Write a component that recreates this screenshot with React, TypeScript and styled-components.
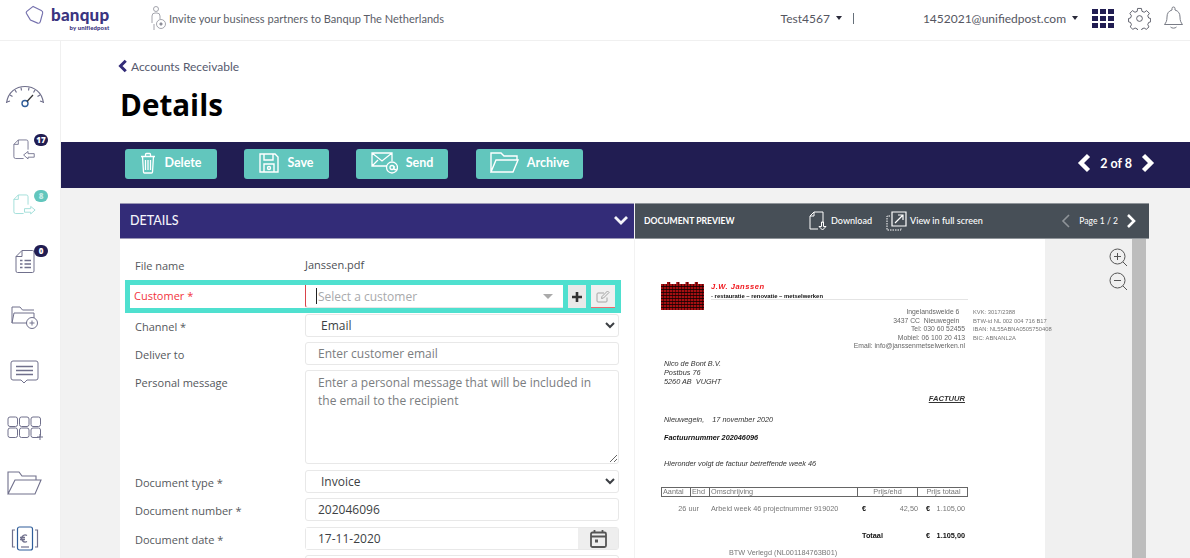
import React from 'react'
import styled, { createGlobalStyle } from 'styled-components'

const GlobalStyle = createGlobalStyle`
  html, body {
    margin: 0;
    padding: 0;
    height: 558px;
    overflow: hidden;
    background: #fff;
    font-family: 'Open Sans', 'Liberation Sans', sans-serif;
  }
  * {
    box-sizing: border-box;
  }
`

const Page = styled.div`
  width: 1190px;
  height: 558px;
  overflow: hidden;
  display: flex;
  flex-direction: column;
`
const TopBar = styled.header`
  flex: none;
  height: 41px;
  padding-bottom: 4px;
  display: flex;
  align-items: center;
  border-bottom: 1px solid #f0f0f0;
  font-family: Lato, 'Liberation Sans', sans-serif;
  color: #55565f;
`
const Logo = styled.div`
  display: flex;
  align-items: center;
  width: 150px;
  padding-left: 25px;
  color: #3a3480;
`
const LogoMarkWrap = styled.span`
  margin-top: -6px;
`
const LogoText = styled.div`
  margin-left: 7px;
  display: flex;
  flex-direction: column;
  align-items: flex-end;
  font-weight: 900;
  font-size: 17px;
  line-height: 18px;
  letter-spacing: 0.2px;
`
const LogoSub = styled.span`
  font-size: 6px;
  line-height: 7px;
  letter-spacing: 0.1px;
`
const Invite = styled.div`
  display: flex;
  align-items: center;
  gap: 2px;
  font-size: 11.05px;
  color: #5b5e68;
`
const TopRight = styled.div`
  margin-left: auto;
  display: flex;
  align-items: center;
  font-size: 12px;
  padding-right: 7px;
`
const Caret = styled.span<{ $gap?: number; $color?: string }>`
  width: 0;
  height: 0;
  margin-left: ${(p) => p.$gap ?? 6}px;
  border-left: 3.5px solid transparent;
  border-right: 3.5px solid transparent;
  border-top: 4px solid ${(p) => p.$color ?? '#2a2a3a'};
`
const CustomerCaret = styled.span`
  width: 0;
  height: 0;
  margin-left: auto;
  border-left: 5px solid transparent;
  border-right: 5px solid transparent;
  border-top: 5px solid #aaa;
`
const Company = styled.span`
  display: flex;
  align-items: center;
`
const Divider = styled.span`
  width: 1px;
  height: 11px;
  margin-left: 11px;
  margin-right: 69px;
  background: #66707a;
`
const Email = styled.span`
  display: flex;
  align-items: center;
  margin-right: 14px;
`
const AppsGrid = styled.div`
  display: grid;
  grid-template-columns: repeat(3, 6px);
  grid-auto-rows: 5px;
  gap: 2px;
  margin-right: 14px;
`
const AppDot = styled.span`
  background: #211d52;
`
const BellWrap = styled.span`
  display: flex;
  margin-left: 13px;
`

const Body = styled.div`
  flex: 1;
  display: flex;
  min-height: 0;
`
const SideNav = styled.nav`
  flex: none;
  width: 61px;
  padding-top: 27px;
  border-right: 1px solid #f0f0f0;
  display: flex;
  flex-direction: column;
  overflow: hidden;
`
const NavItem = styled.div<{ $color?: string }>`
  position: relative;
  flex: none;
  height: 55.4px;
  display: flex;
  align-items: center;
  justify-content: center;
  padding-right: 11px;
  color: ${(p) => p.$color ?? '#70708c'};
`
const Badge = styled.span<{ $teal?: boolean }>`
  position: absolute;
  top: 11px;
  left: 34px;
  min-width: 14px;
  height: 12px;
  padding: 0 2px;
  border-radius: 7px;
  background: ${(p) => (p.$teal ? '#62c6bd' : '#211d52')};
  color: ${(p) => (p.$teal ? '#c6ece8' : '#fff')};
  font-size: 8px;
  font-weight: 800;
  line-height: 12px;
  text-align: center;
`

const Main = styled.main`
  flex: 1;
  min-width: 0;
  display: flex;
  flex-direction: column;
`
const TitleBlock = styled.div`
  flex: none;
  height: 101px;
  padding: 16px 0 0 59px;
`
const BackLink = styled.div`
  display: flex;
  align-items: center;
  height: 18px;
  margin-left: -3px;
  font-family: Lato, 'Liberation Sans', sans-serif;
  font-size: 12px;
  color: #565a6e;
`
const BackArrow = styled.span`
  color: #332c78;
`
const Title = styled.h1`
  margin: 11px 0 0;
  font-size: 29.6px;
  line-height: 38px;
  font-weight: 700;
  color: #000;
`
const Toolbar = styled.div`
  flex: none;
  height: 46px;
  background: #211d52;
  display: flex;
  align-items: center;
  padding: 0 34px 2px 64px;
  font-family: Lato, 'Liberation Sans', sans-serif;
`
const ActionButton = styled.div<{ $width: number; $gap: number }>`
  width: ${(p) => p.$width}px;
  height: 30px;
  margin-right: ${(p) => p.$gap}px;
  padding-bottom: 3px;
  display: flex;
  align-items: center;
  justify-content: center;
  gap: 8px;
  border-radius: 3px;
  background: #62c6bd;
  color: #fff;
  font-size: 12.5px;
  font-weight: 700;
`
const Pager = styled.div`
  margin-left: auto;
  padding-bottom: 2px;
  display: flex;
  align-items: center;
  gap: 4px;
  color: #fff;
  font-size: 12.5px;
  font-weight: 700;
`
const Workspace = styled.div`
  flex: 1;
  min-height: 0;
  background: #f2f2f2;
  padding: 15px 41px 0 59px;
  display: flex;
  gap: 1px;
  overflow: hidden;
`
const DetailsPanel = styled.section`
  flex: none;
  width: 514px;
  background: #fff;
  display: flex;
  flex-direction: column;
`
const DetailsHead = styled.div`
  flex: none;
  height: 36px;
  padding: 0 5px 2px 10px;
  background: #332c78;
  border: 1px solid #9a97b5;
  border-width: 1px 0;
  color: #f4f4fa;
  display: flex;
  align-items: center;
  justify-content: space-between;
  font-family: Lato, 'Liberation Sans', sans-serif;
  font-size: 12.5px;
  font-weight: 500;
`
const Form = styled.div`
  padding: 14px 15px 0 15px;
`
const Row = styled.div<{ $mb?: number }>`
  display: grid;
  grid-template-columns: 170px 1fr;
  margin-bottom: ${(p) => p.$mb ?? 4}px;
`
const Label = styled.label`
  font-size: 11px;
  line-height: 23px;
  padding-top: 1px;
  color: #55585c;
`
const FileLabel = styled(Label)`
  padding-top: 2px;
  line-height: 22px;
`
const FileName = styled.span`
  font-size: 11px;
  line-height: 23px;
  color: #4d5055;
`
const TextField = styled.input`
  width: 100%;
  height: 23px;
  padding: 0 12px;
  border: 1px solid #e8e8e8;
  border-radius: 3px;
  outline: none;
  background: #fff;
  font-family: inherit;
  font-size: 12px;
  color: #3c3f44;
  &::placeholder {
    color: #7a7d80;
    opacity: 1;
  }
`
const SelectField = styled.select`
  width: 100%;
  height: 23px;
  padding: 0 11px;
  border: 1px solid #e8e8e8;
  border-radius: 3px;
  outline: none;
  background: #fff;
  font-family: inherit;
  font-size: 12px;
  color: #3c3f44;
`
const MessageField = styled.textarea`
  display: block;
  width: 100%;
  height: 94px;
  padding: 3px 12px;
  border: 1px solid #e8e8e8;
  border-radius: 3px;
  outline: none;
  font-family: inherit;
  font-size: 12px;
  line-height: 18px;
  color: #3c3f44;
  &::placeholder {
    color: #7a7d80;
    opacity: 1;
  }
`
const CustomerRow = styled.div`
  display: flex;
  gap: 5px;
  height: 33px;
  margin: 0 -2px 1px -10px;
  padding: 5px 6px 5px 5px;
  background: #4fe0cf;
`
const CustomerMain = styled.div`
  flex: 1;
  display: grid;
  grid-template-columns: 175px 1fr;
  background: #fff;
`
const CustomerLabel = styled.span`
  padding-left: 4px;
  font-size: 11px;
  line-height: 22px;
  color: #f2343c;
`
const CustomerSelect = styled.div`
  display: flex;
  align-items: center;
  border-left: 1px solid #d9434a;
  border-bottom: 1px solid #e6e6e6;
  border-radius: 0 0 0 3px;
  padding: 0 10px 0 10px;
  font-size: 12px;
  color: #a8a9ab;
`
const TextCursor = styled.span`
  width: 1px;
  height: 16px;
  margin-right: 1px;
  background: #222;
`
const CustomerAdd = styled.div`
  width: 18px;
  display: flex;
  align-items: center;
  justify-content: center;
  background: #e9e9e9;
  color: #333;
`
const CustomerEdit = styled.div`
  width: 24px;
  display: flex;
  align-items: center;
  justify-content: center;
  background: #f0f0f0;
  border-bottom: 1px solid #ee6b70;
  color: #a4a4a4;
`
const DateGroup = styled.div`
  display: flex;
  height: 23px;
  border: 1px solid #e8e8e8;
  border-radius: 3px;
`
const DateValue = styled.input`
  flex: 1;
  min-width: 0;
  padding: 0 12px;
  border: 0;
  outline: none;
  font-family: inherit;
  font-size: 12px;
  color: #3c3f44;
`
const DateButton = styled.div`
  flex: none;
  width: 40px;
  display: flex;
  align-items: center;
  justify-content: center;
  background: #eeeeee;
  color: #555;
`

const PreviewPanel = styled.section`
  flex: none;
  width: 514px;
  display: flex;
  flex-direction: column;
  font-family: Lato, 'Liberation Sans', sans-serif;
`
const PreviewHead = styled.div`
  flex: none;
  height: 36px;
  background: #474f57;
  border: 1px solid #8f9499;
  border-width: 1px 0;
  display: flex;
  align-items: center;
  padding: 0 0 1px 9px;
  color: #fff;
  font-size: 8.6px;
`
const PreviewTitle = styled.span`
  width: 165px;
  font-weight: 700;
`
const PreviewAction = styled.span<{ $gap: number }>`
  display: flex;
  align-items: center;
  gap: 3px;
  margin-right: ${(p) => p.$gap}px;
  font-size: 9.05px;
  font-weight: 500;
`
const PageControl = styled.div`
  margin-left: auto;
  display: flex;
  align-items: center;
  gap: 4px;
  padding-right: 11px;
`
const MutedArrow = styled.span`
  color: #8f9499;
`
const PreviewBody = styled.div`
  flex: 1;
  display: flex;
  min-height: 0;
`
const Sheet = styled.div`
  flex: none;
  width: 410px;
  background: #fff;
  padding: 43px 0 0 26px;
  font-family: 'Liberation Sans', Arial, sans-serif;
  filter: blur(0.7px);
  font-size: 7.3px;
  color: #333;
`
const Rail = styled.div`
  flex: 1;
  background: #f0f0f0;
  display: flex;
  flex-direction: column;
  align-items: flex-end;
  gap: 5px;
  padding: 9px 4px 0 0;
  color: #555;
`
const ScrollBar = styled.div`
  flex: none;
  width: 14px;
  margin-right: 3px;
  background: #bdbdbd;
`
const Letterhead = styled.div`
  display: flex;
  height: 28px;
`
const Bricks = styled.div`
  flex: none;
  width: 43px;
  height: 28px;
  margin-right: 7px;
  background-image: repeating-linear-gradient(90deg, transparent 0 2px, rgba(20, 0, 0, 0.55) 2px 3px),
    repeating-linear-gradient(0deg, #a50f12 0 2px, #2a0505 2px 3px);
  border-top: 2px dashed #fff;
`
const CompanyName = styled.div`
  color: #f01a20;
  font-size: 7.6px;
  font-weight: 700;
  font-style: italic;
  letter-spacing: 0.5px;
  line-height: 9px;
`
const Trades = styled.div`
  margin-top: 2px;
  color: #111;
  font-size: 5.9px;
  font-weight: 700;
  white-space: nowrap;
  width: 257px;
  border-bottom: 1px solid #e4e4e4;
`
const AddressBlock = styled.div`
  display: grid;
  grid-template-columns: 304px 100px;
  column-gap: 8px;
  margin-top: -2px;
  line-height: 8.6px;
`
const AddressLeft = styled.div`
  text-align: right;
  color: #666;
  font-size: 6.8px;
  white-space: pre;
`
const AddressRight = styled.div`
  color: #777;
  font-size: 5.8px;
  white-space: nowrap;
`
const Addressee = styled.div`
  margin: 8px 0 0 3px;
  font-style: italic;
  line-height: 9px;
`
const FactuurHead = styled.div`
  width: 304px;
  margin-top: 8px;
  text-align: right;
  font-size: 7.6px;
  font-weight: 700;
  font-style: italic;
  text-decoration: underline;
`
const LetterLine = styled.div<{ $mt: number; $bold?: boolean }>`
  margin: ${(p) => p.$mt}px 0 0 3px;
  line-height: 9px;
  font-style: italic;
  font-weight: ${(p) => (p.$bold ? 700 : 400)};
  color: ${(p) => (p.$bold ? '#111' : '#333')};
  white-space: pre;
`
const InvoiceTable = styled.div`
  display: grid;
  grid-template-columns: 29px 19px 148px 60px 51px;
  width: 307px;
  margin-top: 19px;
  border: 1px solid #666;
  color: #777;
  line-height: 8px;
  white-space: nowrap;
`
const HeadCell = styled.span<{ $center?: boolean }>`
  padding: 0 1px;
  border-right: 1px solid #666;
  text-align: ${(p) => (p.$center ? 'center' : 'left')};
  &:last-child {
    border-right: 0;
  }
`
const LineRow = styled.div<{ $mt: number; $strong?: boolean }>`
  display: grid;
  grid-template-columns: 50px 151px 30px 26px 17px 30px;
  width: 304px;
  margin-top: ${(p) => p.$mt}px;
  line-height: 9px;
  color: ${(p) => (p.$strong ? '#111' : '#777')};
  font-weight: ${(p) => (p.$strong ? 700 : 400)};
  white-space: nowrap;
`
const QtyCell = styled.span`
  padding-right: 12px;
  text-align: right;
`
const RightCell = styled.span`
  text-align: right;
`
const EuroCell = styled.span`
  color: #111;
  font-weight: 700;
`
const SecondEuro = styled(EuroCell)`
  padding-left: 8px;
`
const VatNote = styled.div`
  margin: 8px 0 0 68px;
  color: #777;
  line-height: 9px;
`

const Ico = styled.svg`
  display: block;
  flex: none;
  fill: none;
  stroke: currentColor;
  stroke-width: 1;
`

const Chevron = ({ dir = 'left', size = 14, width = 3 }: { dir?: 'left' | 'right' | 'down'; size?: number; width?: number }) => {
  const d = dir === 'left' ? 'M10 2 4 8l6 6' : dir === 'right' ? 'M6 2l6 6-6 6' : 'M2 5l6 6 6-6'
  return (
    <Ico width={size} height={size} viewBox="0 0 16 16" style={{ strokeWidth: width }}>
      <path d={d} />
    </Ico>
  )
}

const DocBase = () => <path d="M6 1 1 6v14a2 2 0 0 0 2 2h9M6 1v5H1M6 1h9a2 2 0 0 1 2 2v9" />

const DocIn = () => (
  <Ico width="23" height="24" viewBox="0 0 26 27">
    <DocBase />
    <path d="M12 18l5-4v2.500h7v4h-7v2z" />
  </Ico>
)
const DocOut = () => (
  <Ico width="23" height="24" viewBox="0 0 26 27">
    <DocBase />
    <path d="M25 18l-5-4v2.500h-7v4h7v2z" />
  </Ico>
)
const DocList = () => (
  <Ico width="20" height="25" viewBox="0 0 20 24">
    <path d="M7 1h10.500a1.500 1.500 0 0 1 1.500 1.500v19a1.500 1.500 0 0 1-1.500 1.500h-15A1.500 1.500 0 0 1 1 21.500V7zM7 1v6H1" />
    <path d="M5 11h2.500M5 14.500h2.500M5 18h2.500M9.500 11H16M9.500 14.500H16M9.500 18H16" strokeWidth="1.300" />
  </Ico>
)
const Gauge = () => (
  <Ico width="40" height="24" viewBox="0 0 40 24" style={{ strokeWidth: 1.2 }}>
    <path d="M1.500 19C3 8 11 2.500 20 2.500S37 8 38.500 19" />
    <path d="M2 18l3-1M5 11l2.500 1.500M10 6l1.500 2.500M16 3.500l.5 3M24 3.500l-.5 3M30 6l-1.500 2.500M35 11l-2.500 1.500M38 18l-3-1" />
    <circle cx="20" cy="19.500" r="3" stroke="#2f5d9a" strokeWidth="1.400" />
    <path d="M22 17.500l6-6.500" stroke="#333" />
  </Ico>
)
const FolderPlus = () => (
  <Ico width="28" height="25" viewBox="0 0 28 25">
    <path d="M1 18V2h8l2.500 3H23M3 8h20v5M3 8 1 18h15" />
    <circle cx="21" cy="18" r="5.500" />
    <path d="M21 15.500v5M18.500 18h5" />
  </Ico>
)
const Message = () => (
  <Ico width="29" height="25" viewBox="0 0 29 25">
    <path d="M3 1h23a2 2 0 0 1 2 2v15a2 2 0 0 1-2 2h-9l-3 3-3-3H3a2 2 0 0 1-2-2V3a2 2 0 0 1 2-2z" />
    <path d="M6 6.500h17M6 10.500h17M6 14.500h17" strokeWidth="1.300" />
  </Ico>
)
const TilesPlus = () => (
  <Ico width="36" height="24" viewBox="0 0 36 24">
    {[0, 11.500, 23].map((x) =>
      [0, 11].map((y) => <rect key={`${x}-${y}`} x={x + 1} y={y + 1} width="9.500" height="9.500" rx="2" />),
    )}
    <path d="M33 18v6M30 21h6" />
  </Ico>
)
const FolderOpen = () => (
  <Ico width="35" height="26" viewBox="0 0 35 26">
    <path d="M1 24V2h11l3 4h14v4M1 24h27l6-14H8z" strokeWidth="1.100" />
  </Ico>
)
const EuroDoc = () => (
  <Ico width="28" height="25" viewBox="0 0 28 25" style={{ strokeWidth: 1.200 }}>
    <rect x="6.500" y="1" width="15" height="23" rx="2" stroke="#2f5d9a" />
    <path d="M4 4H1.500v17H4M24 4h2.500v17H24" />
    <path d="M16 9.500a3.500 3.500 0 1 0 0 6M9 11.500h5M9 13.500h5" strokeWidth="1.400" />
    <path d="M10 21h8" />
  </Ico>
)

const LogoMark = () => (
  <Ico width="19" height="22" viewBox="0 0 21 22" style={{ color: '#7470ad', strokeWidth: 1.300 }}>
    <path d="M9 1.500l9 4.500q2 1 1.500 3L17 18q-.5 2.500-3 2L6 16.500 1.500 9q-.5-1 .5-2z" />
  </Ico>
)
const InviteIcon = () => (
  <Ico width="17" height="25" viewBox="0 0 17 25" style={{ color: '#8d8e98', strokeWidth: 0.8 }}>
    <circle cx="6" cy="3" r="2.500" />
    <path d="M2 10a3 3 0 0 1 3-3h2a3 3 0 0 1 3 3v3M2 10v7M4 18v6" />
    <circle cx="11" cy="18" r="4.500" />
    <circle cx="11" cy="18" r="1.200" fill="currentColor" />
  </Ico>
)
const Gear = () => (
  <Ico width="23" height="23" viewBox="0 0 24 24" style={{ color: '#4a4d5a', strokeWidth: 0.9 }}>
    <circle cx="12" cy="12" r="3" />
    <path d="M10 1.500h4l.6 3 2.300 1 2.600-1.700 2.800 2.800-1.700 2.600 1 2.300 2 .5v3.500l-2 .6-1 2.300 1.300 2.400-2.800 2.500-2.300-1.400-2.300 1-.5 2.100h-3.800l-.5-2.100-2.300-1-2.300 1.400-2.800-2.500 1.300-2.400-1-2.300-2-.6v-3.500l2-.5 1-2.300-1.700-2.600 2.800-2.800 2.600 1.700 2.300-1z" />
  </Ico>
)
const Bell = () => (
  <Ico width="19" height="24" viewBox="0 0 19 24" style={{ color: '#6a6d78', strokeWidth: 0.9 }}>
    <path d="M9.500 1a1.500 1.500 0 0 1 1.500 1.500V4c3.500 1 5 3.500 5 7 0 4 1 5.500 2.500 7.500H.5C2 16.500 3 15 3 11c0-3.500 1.500-6 5-7V2.500A1.500 1.500 0 0 1 9.500 1z" />
    <path d="M6.500 21c1.500 1.500 4.500 1.500 6 0" />
  </Ico>
)
const Trash = () => (
  <Ico width="16" height="22" viewBox="0 0 16 22" style={{ strokeWidth: 1.300 }}>
    <path d="M1 4.500h14M5.500 4.500V2.500q0-1 1-1h3q1 0 1 1v2M2.500 4.500l1 15.500q0 1 1 1h7q1 0 1-1l1-15.500M5.500 8v10M8 8v10M10.500 8v10" />
  </Ico>
)
const Floppy = () => (
  <Ico width="20" height="20" viewBox="0 0 20 20" style={{ strokeWidth: 1.400 }}>
    <path d="M1 1h15l3 3v15H1zM5 1v6h9V1M5 19v-8h10v8" />
    <circle cx="10" cy="15" r="1.500" />
  </Ico>
)
const MailAt = () => (
  <Ico width="27" height="22" viewBox="0 0 27 22" style={{ strokeWidth: 1.300 }}>
    <path d="M16 14H1V1h20v8M1 1l10 8 10-8M1 14l6-6" />
    <circle cx="21" cy="15.500" r="5.500" />
    <circle cx="21" cy="15.500" r="2" />
    <path d="M23 14v3q1 1.500 2.500 0" />
  </Ico>
)
const ArchiveFolder = () => (
  <Ico width="29" height="21" viewBox="0 0 29 21" style={{ strokeWidth: 1.400 }}>
    <path d="M1 20V1h10l3 3h13v4M1 20h22l5-12H6z" />
  </Ico>
)
const Download = () => (
  <Ico width="19" height="20" viewBox="0 0 19 20">
    <path d="M5 1h9v11M5 1 1 5v13h8M5 1v4H1" />
    <path d="M12.500 11v4.500H10l3.500 3.500 3.500-3.500h-2.500V11z" />
  </Ico>
)
const FullScreen = () => (
  <Ico width="21" height="20" viewBox="0 0 21 20">
    <path d="M6 1h14v14H6zM9 12l8-8M12 4h5v5" strokeWidth="1.200" />
    <path d="M4 5H1v14h14v-2" strokeDasharray="1.500 1" />
  </Ico>
)
const ZoomIcon = ({ plus }: { plus?: boolean }) => (
  <Ico width="19" height="19" viewBox="0 0 19 19">
    <circle cx="8.500" cy="8.500" r="7.500" />
    <path d="M14 14l4 4M5 8.500h7" />
    {plus && <path d="M8.500 5v7" />}
  </Ico>
)
const EditIcon = () => (
  <Ico width="14" height="13" viewBox="0 0 14 13">
    <path d="M11 7.500V11a1 1 0 0 1-1 1H2a1 1 0 0 1-1-1V4a1 1 0 0 1 1-1h6" />
    <path d="M5.500 8.500l.5-2L11.500 1l1.500 1.500L7.500 8z" />
  </Ico>
)
const CalendarIcon = () => (
  <Ico width="17" height="18" viewBox="0 0 17 18" style={{ strokeWidth: 1.800 }}>
    <rect x="1" y="2.500" width="15" height="14.500" rx="1.500" />
    <path d="M1 6.500h15M4.500 0v3M12.500 0v3" />
    <rect x="5" y="9.500" width="3" height="3" fill="currentColor" stroke="none" />
  </Ico>
)
const PlusIcon = () => (
  <Ico width="12" height="12" viewBox="0 0 12 12" style={{ strokeWidth: 2.600 }}>
    <path d="M6 1v10M1 6h10" />
  </Ico>
)

export default function App() {
  return (
    <Page>
      <GlobalStyle />
      <TopBar>
        <Logo>
          <LogoMarkWrap>
            <LogoMark />
          </LogoMarkWrap>
          <LogoText>
            banqup
            <LogoSub>by unifiedpost</LogoSub>
          </LogoText>
        </Logo>
        <Invite>
          <InviteIcon />
          Invite your business partners to Banqup The Netherlands
        </Invite>
        <TopRight>
          <Company>
            Test4567
            <Caret />
          </Company>
          <Divider />
          <Email>
            1452021@unifiedpost.com
            <Caret />
          </Email>
          <AppsGrid>
            {Array.from({ length: 9 }, (_, i) => (
              <AppDot key={i} />
            ))}
          </AppsGrid>
          <Gear />
          <BellWrap>
            <Bell />
          </BellWrap>
        </TopRight>
      </TopBar>
      <Body>
        <SideNav>
          <NavItem>
            <Gauge />
          </NavItem>
          <NavItem>
            <DocIn />
            <Badge>17</Badge>
          </NavItem>
          <NavItem $color="#9adcd6">
            <DocOut />
            <Badge $teal>8</Badge>
          </NavItem>
          <NavItem>
            <DocList />
            <Badge>0</Badge>
          </NavItem>
          <NavItem>
            <FolderPlus />
          </NavItem>
          <NavItem>
            <Message />
          </NavItem>
          <NavItem>
            <TilesPlus />
          </NavItem>
          <NavItem>
            <FolderOpen />
          </NavItem>
          <NavItem>
            <EuroDoc />
          </NavItem>
        </SideNav>
        <Main>
          <TitleBlock>
            <BackLink>
              <BackArrow>
                <Chevron size={14} width={3.400} />
              </BackArrow>
              Accounts Receivable
            </BackLink>
            <Title>Details</Title>
          </TitleBlock>
          <Toolbar>
            <ActionButton $width={92} $gap={27}>
              <Trash />
              Delete
            </ActionButton>
            <ActionButton $width={85} $gap={27}>
              <Floppy />
              Save
            </ActionButton>
            <ActionButton $width={92} $gap={28}>
              <MailAt />
              Send
            </ActionButton>
            <ActionButton $width={107} $gap={0}>
              <ArchiveFolder />
              Archive
            </ActionButton>
            <Pager>
              <Chevron size={20} width={3.500} />
              2 of 8
              <Chevron dir="right" size={20} width={3.500} />
            </Pager>
          </Toolbar>
          <Workspace>
            <DetailsPanel>
              <DetailsHead>
                DETAILS
                <Chevron dir="down" size={16} width={2.800} />
              </DetailsHead>
              <Form>
                <Row $mb={3}>
                  <FileLabel>File name</FileLabel>
                  <FileName>Janssen.pdf</FileName>
                </Row>
                <CustomerRow>
                  <CustomerMain>
                    <CustomerLabel>Customer *</CustomerLabel>
                    <CustomerSelect>
                      <TextCursor />
                      Select a customer
                      <CustomerCaret />
                    </CustomerSelect>
                  </CustomerMain>
                  <CustomerAdd>
                    <PlusIcon />
                  </CustomerAdd>
                  <CustomerEdit>
                    <EditIcon />
                  </CustomerEdit>
                </CustomerRow>
                <Row>
                  <Label>Channel *</Label>
                  <SelectField defaultValue="Email">
                    <option>Email</option>
                  </SelectField>
                </Row>
                <Row>
                  <Label>Deliver to</Label>
                  <TextField placeholder="Enter customer email" />
                </Row>
                <Row $mb={6}>
                  <Label>Personal message</Label>
                  <MessageField placeholder="Enter a personal message that will be included in the email to the recipient" />
                </Row>
                <Row>
                  <Label>Document type *</Label>
                  <SelectField defaultValue="Invoice">
                    <option>Invoice</option>
                  </SelectField>
                </Row>
                <Row $mb={5}>
                  <Label>Document number *</Label>
                  <TextField defaultValue="202046096" />
                </Row>
                <Row>
                  <Label>Document date *</Label>
                  <DateGroup>
                    <DateValue defaultValue="17-11-2020" />
                    <DateButton>
                      <CalendarIcon />
                    </DateButton>
                  </DateGroup>
                </Row>
                <Row>
                  <span />
                  <TextField />
                </Row>
              </Form>
            </DetailsPanel>
            <PreviewPanel>
              <PreviewHead>
                <PreviewTitle>DOCUMENT PREVIEW</PreviewTitle>
                <PreviewAction $gap={14}>
                  <Download />
                  Download
                </PreviewAction>
                <PreviewAction $gap={0}>
                  <FullScreen />
                  View in full screen
                </PreviewAction>
                <PageControl>
                  <MutedArrow>
                    <Chevron size={16} width={1.600} />
                  </MutedArrow>
                  Page 1 / 2
                  <Chevron dir="right" size={16} width={2.600} />
                </PageControl>
              </PreviewHead>
              <PreviewBody>
                <Sheet>
                  <Letterhead>
                    <Bricks />
                    <div>
                      <CompanyName>J.W. Janssen</CompanyName>
                      <Trades>- restauratie – renovatie – metselwerken</Trades>
                    </div>
                  </Letterhead>
                  <AddressBlock>
                    <AddressLeft>
                      {'Ingelandsweide 6   \n3437 CC  Nieuwegein   \nTel: 030 60 52455\nMobiel: 06 100 20 413\nEmail: info@janssenmetselwerken.nl'}
                    </AddressLeft>
                    <AddressRight>
                      KVK: 3017/2388<br />
                      BTW-id NL 002 004 716 B17<br />
                      IBAN: NL55ABNA0505750408<br />
                      BIC: ABNANL2A
                    </AddressRight>
                  </AddressBlock>
                  <Addressee>
                    Nico de Bont B.V.<br />
                    Postbus 76<br />
                    5260 AB&nbsp; VUGHT
                  </Addressee>
                  <FactuurHead>FACTUUR</FactuurHead>
                  <LetterLine $mt={12}>{'Nieuwegein,    17 november 2020'}</LetterLine>
                  <LetterLine $mt={9} $bold>Factuurnummer 202046096</LetterLine>
                  <LetterLine $mt={17}>Hieronder volgt de factuur betreffende week 46</LetterLine>
                  <InvoiceTable>
                    <HeadCell>Aantal</HeadCell>
                    <HeadCell>Ehd</HeadCell>
                    <HeadCell>Omschrijving</HeadCell>
                    <HeadCell $center>Prijs/ehd</HeadCell>
                    <HeadCell $center>Prijs totaal</HeadCell>
                  </InvoiceTable>
                  <LineRow $mt={7}>
                    <QtyCell>26 uur</QtyCell>
                    <span>Arbeid week 46 projectnummer 919020</span>
                    <EuroCell>€</EuroCell>
                    <RightCell>42,50</RightCell>
                    <SecondEuro>€</SecondEuro>
                    <RightCell>1.105,00</RightCell>
                  </LineRow>
                  <LineRow $mt={18} $strong>
                    <span />
                    <span />
                    <span>Totaal</span>
                    <span />
                    <SecondEuro>€</SecondEuro>
                    <RightCell>1.105,00</RightCell>
                  </LineRow>
                  <VatNote>BTW Verlegd (NL001184763B01)</VatNote>
                </Sheet>
                <Rail>
                  <ZoomIcon plus />
                  <ZoomIcon />
                </Rail>
                <ScrollBar />
              </PreviewBody>
            </PreviewPanel>
          </Workspace>
        </Main>
      </Body>
    </Page>
  )
}
